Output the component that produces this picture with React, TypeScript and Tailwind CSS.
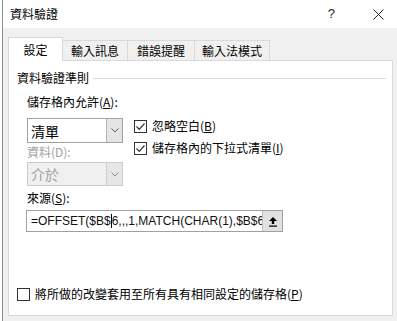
import React from 'react';

const cjk = '"Noto Sans CJK TC", "Noto Sans", sans-serif';
const latin = '"Liberation Sans", "Noto Sans CJK TC", sans-serif';

function CheckBox({ checked }: { checked: boolean }) {
  return (
    <span className="flex h-[13px] w-[13px] shrink-0 items-center justify-center border border-[#333333] bg-white">
      {checked && (
        <svg width="11" height="11" viewBox="0 0 11 11">
          <path d="M1.5 5.5 L4.3 8.3 L9.5 2.5" fill="none" stroke="#333333" strokeWidth="1.2" />
        </svg>
      )}
    </span>
  );
}

function Select({ value, disabled }: { value: string; disabled?: boolean }) {
  return (
    <div
      className={`flex w-[96px] border ${
        disabled ? 'h-[24px] border-[#cccccc] bg-[#f0f0f0] text-[#a0a0a0]' : 'h-[25px] border-[#a0a0a0] bg-white text-black'
      }`}
    >
      <span className="flex flex-1 items-center pl-[3px] text-[14px] leading-[18px]">{value}</span>
      <span
        className={`flex w-[16px] items-center justify-center border-l ${
          disabled ? 'border-[#cccccc] bg-[#e6e6e6]' : 'border-[#b4b4b4] bg-[#e5e5e5]'
        }`}
      >
        <svg width="8" height="5" viewBox="0 0 8 5">
          <path d="M0.5 0.5 L4 4 L7.5 0.5" fill="none" stroke={disabled ? '#8a8a8a' : '#606060'} strokeWidth="1" />
        </svg>
      </span>
    </div>
  );
}

const tabs = ['輸入訊息', '錯誤提醒', '輸入法模式'];
const tabWidths = ['w-[65px]', 'w-[67px]', 'w-[75px]'];

export default function App() {
  return (
    <div className="flex h-[321px] w-[397px] overflow-hidden bg-white text-[12px] leading-[16px] text-black" style={{ fontFamily: cjk }}>
      <div className="w-[2px] bg-white" />
      <div className="w-px bg-[#8c8c8c]" />
      <div className="flex flex-1 flex-col">
        {/* title bar */}
        <div className="flex h-[28px] items-center bg-white pl-[7px]">
          <span>資料驗證</span>
          <span className="ml-auto mr-[38px] text-[13px] text-[#222]" style={{ fontFamily: latin }}>?</span>
          <svg className="mr-[13px]" width="11" height="11" viewBox="0 0 11 11">
            <path d="M0.5 0.5 L10.5 10.5 M10.5 0.5 L0.5 10.5" stroke="#222" strokeWidth="1" />
          </svg>
        </div>

        {/* body */}
        <div className="flex flex-1 flex-col bg-[#f0f0f0] pb-[5px] pl-[5px] pr-[4px]">
          <div className="mt-[9px] flex items-start">
            <div className="relative z-10 -mb-px flex h-[24px] w-[55px] items-center justify-center border border-b-0 border-[#d9d9d9] bg-white">
              設定
            </div>
            {tabs.map((t, i) => (
              <div
                key={t}
                className={`mt-[3px] flex h-[20px] ${tabWidths[i]} items-center justify-center border border-b-0 border-l-0 border-[#d9d9d9] bg-[#f0f0f0]`}
              >
                {t}
              </div>
            ))}
          </div>

          <div className="flex flex-1 flex-col border border-[#d9d9d9] bg-white pl-[8px] pr-[6px]">
            <div className="mt-[9px] flex items-center">
              <span>資料驗證準則</span>
              <span className="ml-[4px] h-px flex-1 bg-[#dcdcdc]" />
            </div>

            <div className="pl-[10px]">
              <div className="mt-[8px]">
                儲存格內允許(<u>A</u>):
              </div>
              <div className="mt-[8px] flex">
                <div className="flex flex-col">
                  <Select value="清單" />
                  <div className="mt-[1px] text-[#a0a0a0]">資料(D):</div>
                  <div className="mt-[2px]">
                    <Select value="介於" disabled />
                  </div>
                </div>
                <div className="ml-[11px] flex flex-col gap-[6px]">
                  <div className="flex h-[16px] items-center gap-[5px]">
                    <CheckBox checked />
                    <span>
                      忽略空白(<u>B</u>)
                    </span>
                  </div>
                  <div className="flex h-[16px] items-center gap-[5px]">
                    <CheckBox checked />
                    <span>
                      儲存格內的下拉式清單(<u>I</u>)
                    </span>
                  </div>
                </div>
              </div>

              <div className="mt-[4px]">
                來源(<u>S</u>):
              </div>
              <div className="-ml-px mt-[4px] flex h-[22px] w-[257px] border border-[#a0a0a0] bg-white">
                <div className="flex flex-1 items-center overflow-hidden whitespace-nowrap pl-[4px] text-[12px] text-[#111]" style={{ fontFamily: latin }}>
                  <span>=OFFSET($B$</span>
                  <span className="h-[14px] w-px shrink-0 bg-black" />
                  <span>6,,,1,MATCH(CHAR(1),$B$6</span>
                </div>
                <div className="flex w-[20px] shrink-0 items-center justify-center border-l border-[#c0c0c0] bg-[#e1e1e1]">
                  <svg width="10" height="11" viewBox="0 0 10 11">
                    <path d="M5 1 L9 5 L6.2 5 L6.2 8 L3.8 8 L3.8 5 L1 5 Z" fill="#000" />
                    <rect x="1" y="9.5" width="8" height="1.2" fill="#000" />
                  </svg>
                </div>
              </div>
            </div>

            <div className="mb-[13px] mt-auto flex h-[16px] items-center gap-[5px]">
              <CheckBox checked={false} />
              <span>
                將所做的改變套用至所有具有相同設定的儲存格(<u>P</u>)
              </span>
            </div>
          </div>
        </div>
      </div>
    </div>
  );
}
